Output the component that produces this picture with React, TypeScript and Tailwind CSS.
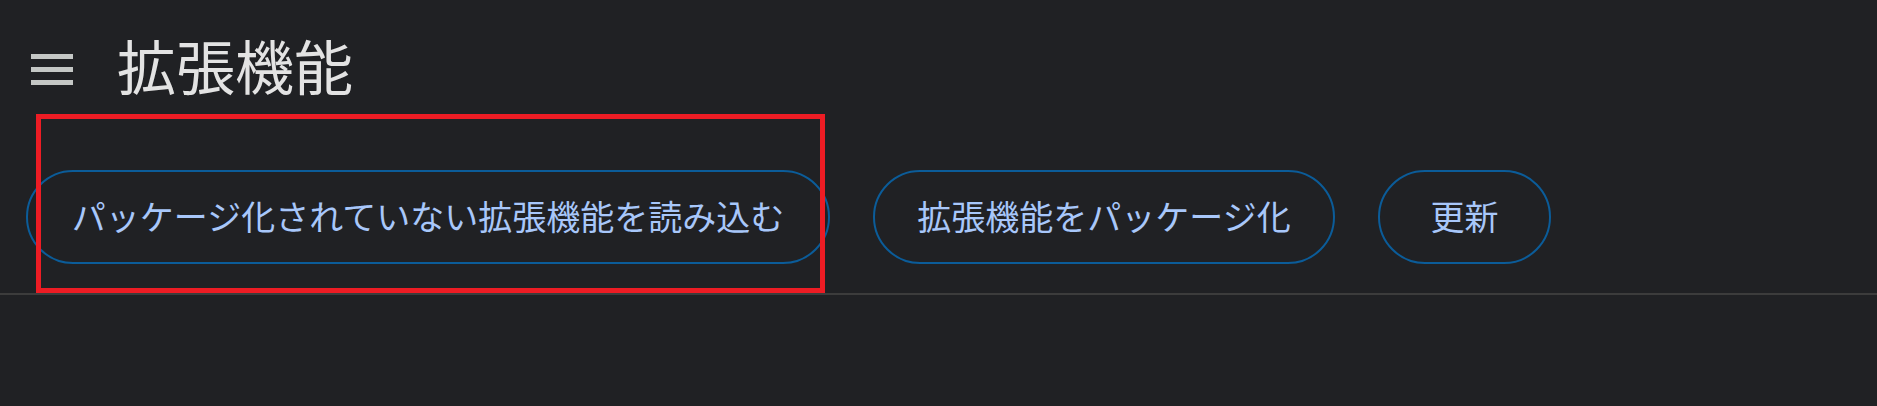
import React from "react";

const jp = "font-['Noto_Sans_CJK_JP','Noto_Sans',sans-serif]";

function HamburgerIcon() {
  return (
    <div className="mt-[11px] flex flex-col gap-[8px]">
      <span className="block h-[5px] w-[42px] bg-[#c4c7c5]" />
      <span className="block h-[5px] w-[42px] bg-[#c4c7c5]" />
      <span className="block h-[5px] w-[42px] bg-[#c4c7c5]" />
    </div>
  );
}

// Outlined pill button (Chrome extensions page toolbar)
function PillButton({ label, width }: { label: string; width: string }) {
  return (
    <button
      className={`${width} flex h-[94px] shrink-0 items-center justify-center rounded-full border-2 border-[#0b5c99] pb-[3px] text-[34px] leading-none text-[#a8c7fa] ${jp}`}
    >
      {label}
    </button>
  );
}

export default function App() {
  return (
    <div className={`relative h-[406px] w-full overflow-hidden bg-[#202124] ${jp}`}>
      <header className="flex h-[134px] items-center pb-[6px] pl-[31px]">
        <HamburgerIcon />
        <h1 className="ml-[44px] text-[59px] font-normal leading-none text-[#e3e3e3]">拡張機能</h1>
      </header>

      <div className="flex items-center gap-[43px] border-b-2 border-[#3c3c3c] pb-[29px] pl-[26px] pt-[36px]">
        <PillButton label="パッケージ化されていない拡張機能を読み込む" width="w-[804px]" />
        <PillButton label="拡張機能をパッケージ化" width="w-[462px]" />
        <PillButton label="更新" width="w-[173px]" />
      </div>

      {/* highlight annotation over the first button */}
      <div className="pointer-events-none absolute left-[36px] top-[114px] h-[179px] w-[789px] border-[5px] border-[#ed1c24]" />
    </div>
  );
}
